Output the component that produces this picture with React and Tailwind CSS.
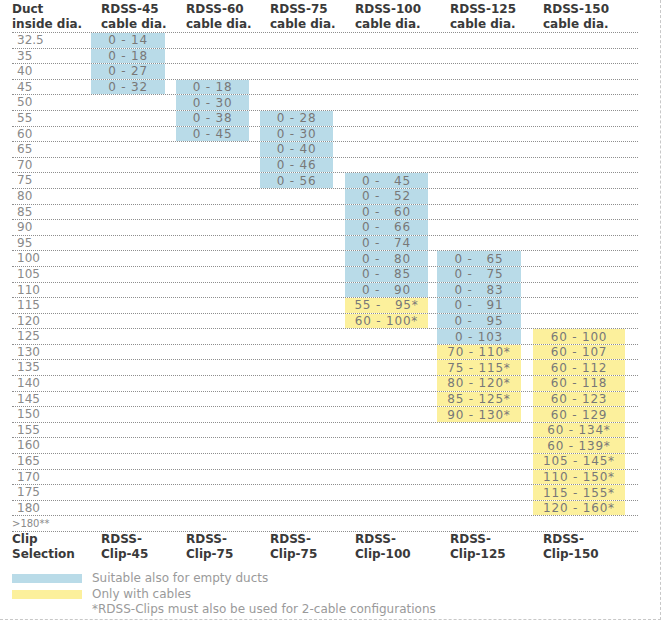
import React from "react";

const cols = [
  { w: "w-[85px]", cell: "w-[74px]" },
  { w: "w-[84px]", cell: "w-[73px]" },
  { w: "w-[85px]", cell: "w-[73px]" },
  { w: "w-[92px]", cell: "w-[83px]" },
  { w: "w-[96px]", cell: "w-[84px]" },
  { w: "w-[105px]", cell: "w-[92px]" },
];

const heads = ["RDSS-45", "RDSS-60", "RDSS-75", "RDSS-100", "RDSS-125", "RDSS-150"];
const clips = ["Clip-45", "Clip-75", "Clip-75", "Clip-100", "Clip-125", "Clip-150"];

const b = (t) => ({ t, c: "b" });
const y = (t) => ({ t, c: "y" });

const rows = [
  ["32.5", b("0 - 14")],
  ["35", b("0 - 18")],
  ["40", b("0 - 27")],
  ["45", b("0 - 32"), b("0 - 18")],
  ["50", null, b("0 - 30")],
  ["55", null, b("0 - 38"), b("0 - 28")],
  ["60", null, b("0 - 45"), b("0 - 30")],
  ["65", null, null, b("0 - 40")],
  ["70", null, null, b("0 - 46")],
  ["75", null, null, b("0 - 56"), b("0 -   45")],
  ["80", null, null, null, b("0 -   52")],
  ["85", null, null, null, b("0 -   60")],
  ["90", null, null, null, b("0 -   66")],
  ["95", null, null, null, b("0 -   74")],
  ["100", null, null, null, b("0 -   80"), b("0 -   65")],
  ["105", null, null, null, b("0 -   85"), b("0 -   75")],
  ["110", null, null, null, b("0 -   90"), b("0 -   83")],
  ["115", null, null, null, y("55 -   95*"), b("0 -   91")],
  ["120", null, null, null, y("60 - 100*"), b("0 -   95")],
  ["125", null, null, null, null, b("0 - 103"), y("60 - 100")],
  ["130", null, null, null, null, y("70 - 110*"), y("60 - 107")],
  ["135", null, null, null, null, y("75 - 115*"), y("60 - 112")],
  ["140", null, null, null, null, y("80 - 120*"), y("60 - 118")],
  ["145", null, null, null, null, y("85 - 125*"), y("60 - 123")],
  ["150", null, null, null, null, y("90 - 130*"), y("60 - 129")],
  ["155", null, null, null, null, null, y("60 - 134*")],
  ["160", null, null, null, null, null, y("60 - 139*")],
  ["165", null, null, null, null, null, y("105 - 145*")],
  ["170", null, null, null, null, null, y("110 - 150*")],
  ["175", null, null, null, null, null, y("115 - 155*")],
  ["180", null, null, null, null, null, y("120 - 160*")],
  [">180**"],
];

const Row = ({ row }) => (
  <div className="flex h-[15.6px] border-b border-dotted border-[#8e8e8e]">
    <div className={`w-[79px] leading-[15px] ${row[0].startsWith(">") ? "text-[10px]" : "pl-[5px]"} text-[#8a8a8a]`}>
      {row[0]}
    </div>
    {cols.map((c, i) => {
      const v = row[i + 1];
      return (
        <div key={i} className={`${c.w} shrink-0`}>
          {v && (
            <div
              className={`${c.cell} h-full flex items-center justify-center whitespace-pre text-[#787878] tracking-[0.8px] ${
                v.c === "b" ? "bg-[#b9dbe8]" : "bg-[#fcf09c]"
              }`}
            >
              {v.t}
            </div>
          )}
        </div>
      );
    })}
  </div>
);

export default function App() {
  return (
    <div
      className="w-[661px] h-[620px] bg-white border-r border-b border-dashed border-[#c8c8c8] pl-[12px] pt-[2px] text-[12px]"
      style={{ fontFamily: '"DejaVu Sans", "Liberation Sans", sans-serif' }}
    >
      <div className="w-[626px]">
        <div className="flex font-bold text-[#3a3a3a] leading-[15px] h-[31px] border-b border-dotted border-[#8e8e8e]">
          <div className="w-[79px]">
            Duct
            <br />
            inside dia.
          </div>
          {heads.map((h, i) => (
            <div key={h} className={`${cols[i].w} shrink-0 ${i === 4 ? "pl-[13px]" : "pl-[10px]"}`}>
              {h}
              <br />
              cable dia.
            </div>
          ))}
        </div>
        {rows.map((r) => (
          <Row key={r[0]} row={r} />
        ))}
        <div className="flex font-bold text-[#3a3a3a] leading-[15px]">
          <div className="w-[79px]">
            Clip
            <br />
            Selection
          </div>
          {clips.map((c, i) => (
            <div key={i} className={`${cols[i].w} shrink-0 ${i === 4 ? "pl-[13px]" : "pl-[10px]"}`}>
              RDSS-
              <br />
              {c}
            </div>
          ))}
        </div>
      </div>
      <div className="mt-[9px] flex flex-col text-[#9a9a9a] leading-[15.5px]">
        <div className="flex items-center gap-[10px]">
          <div className="w-[70px] h-[9px] bg-[#b9dbe8]" />
          <span>Suitable also for empty ducts</span>
        </div>
        <div className="flex items-center gap-[10px]">
          <div className="w-[70px] h-[9px] bg-[#fcf09c]" />
          <span>Only with cables</span>
        </div>
        <div className="pl-[80px]">*RDSS-Clips must also be used for 2-cable configurations</div>
      </div>
    </div>
  );
}
